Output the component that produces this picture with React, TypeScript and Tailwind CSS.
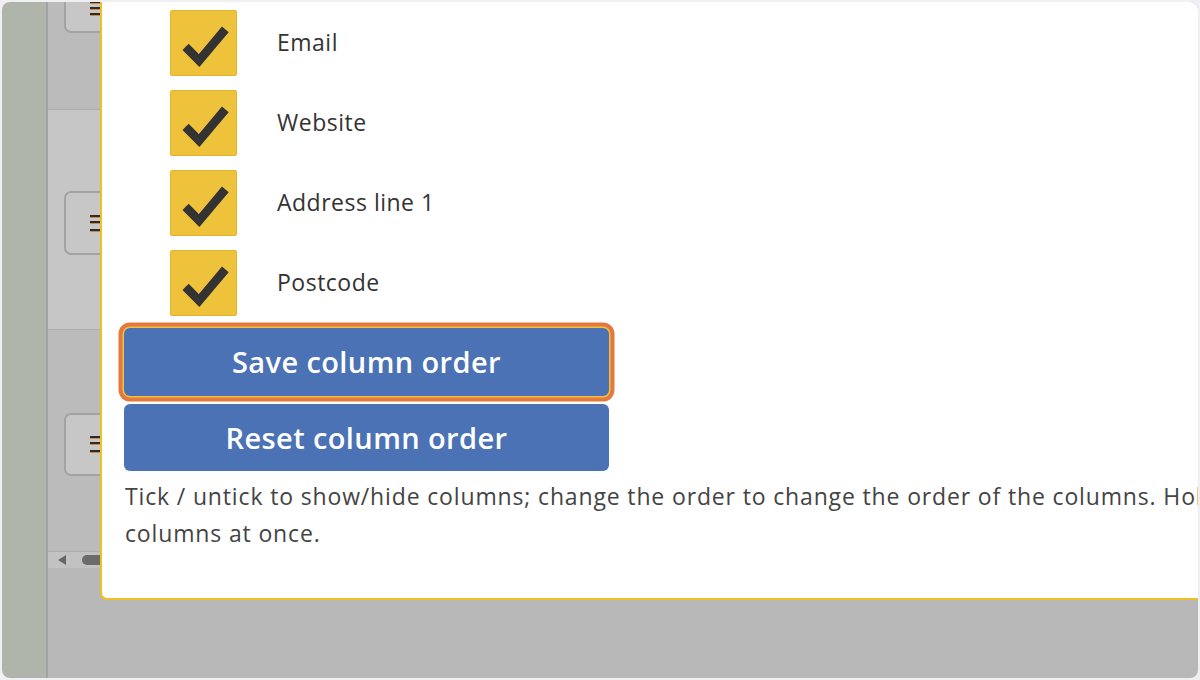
import React from "react";

const fields = ["Email", "Website", "Address line 1", "Postcode"];

const Tick = () => (
    <svg viewBox="0 0 67 66" className="w-[67px] h-[66px]">
        <polyline points="15,37 29,51 56,19" fill="none" stroke="#333333" strokeWidth="9" strokeLinejoin="miter" />
    </svg>
);

const Handle = ({ box, lines }: { box: string; lines: string[] }) => (
    <div className={`absolute left-[16px] w-[90px] rounded-[7px] border-2 border-[#a3a3a3] bg-[#c7c7c7] ${box}`}>
        {lines.map((l) => (
            <div key={l} className={`absolute left-[24px] w-[10px] h-[2px] bg-[#2d2a28] shadow-[0_1px_0_#c98a4a] ${l}`} />
        ))}
    </div>
);

export default function App() {
    return (
        <div className="w-[1200px] h-[680px] bg-[#efeff4] p-[2px]" style={{ fontFamily: '"Open Sans", sans-serif' }}>
            <div className="relative w-full h-full rounded-[8px] overflow-hidden flex flex-row">
                <div className="w-[44px] h-full bg-[#b0b5ab]" />
                <div className="w-[2px] h-full bg-[#a2a2a2]" />
                <div className="relative flex-1 h-full flex flex-col bg-[#b8b8b8]">
                    <div className="relative h-[108px] bg-[#bbbbbb] border-b border-[#adadad]">
                        <Handle box="top-[-40px] h-[71px]" lines={["top-[37px]", "top-[43px]", "top-[49px]"]} />
                    </div>
                    <div className="relative h-[220px] bg-[#c6c6c6] border-b border-[#adadad]">
                        <Handle box="top-[81px] h-[64px]" lines={["top-[22px]", "top-[28px]", "top-[36px]"]} />
                    </div>
                    <div className="relative h-[222px] bg-[#bbbbbb] border-b border-[#adadad]">
                        <Handle box="top-[83px] h-[63px]" lines={["top-[21px]", "top-[27px]", "top-[35px]"]} />
                    </div>
                    <div className="h-[16px] bg-[#c2c2c2] flex flex-row items-center">
                        <div className="ml-[10px] w-0 h-0 border-y-[5px] border-y-transparent border-r-[8px] border-r-[#666666]" />
                        <div className="ml-[16px] w-[40px] h-[10px] rounded-full bg-[#6b6b6b]" />
                    </div>
                </div>

                <div className="absolute left-[98px] top-0 w-[1160px] h-[598px] bg-white border-l-2 border-b-2 border-[#f0c020] rounded-bl-[7px] pt-[8px] text-[#333333]">
                    <div className="flex flex-col gap-[14px]">
                        {fields.map((f) => (
                            <div key={f} className="flex flex-row items-center">
                                <div className="ml-[68px] w-[67px] h-[66px] bg-[#eec23a] border border-[#e2b52c] rounded-[2px] flex items-center justify-center">
                                    <Tick />
                                </div>
                                <span className="ml-[40px] -mt-[2px] text-[23px] tracking-[0.5px] text-[#333333]">{f}</span>
                            </div>
                        ))}
                    </div>
                    <div className="ml-[22px] mt-[12px] flex flex-col gap-[8px] w-[485px]">
                        <button className="h-[68px] rounded-[6px] bg-[#4a72b4] text-white text-[29px] font-semibold tracking-[0.4px] shadow-[0_0_0_1.5px_#efc13a,0_0_0_5.5px_#e3793f]">
                            Save column order
                        </button>
                        <button className="h-[67px] rounded-[6px] bg-[#4a72b4] text-white text-[29px] font-semibold tracking-[0.4px]">
                            Reset column order
                        </button>
                    </div>
                    <p className="ml-[23px] mt-[7px] text-[23px] tracking-[0.85px] leading-[37px] text-[#444444]">
                        <span className="whitespace-nowrap">Tick / untick to show/hide columns; change the order to change the order of the columns. Hold Ctrl to select multiple</span>
                        <br />
                        columns at once.
                    </p>
                </div>
            </div>
        </div>
    );
}
